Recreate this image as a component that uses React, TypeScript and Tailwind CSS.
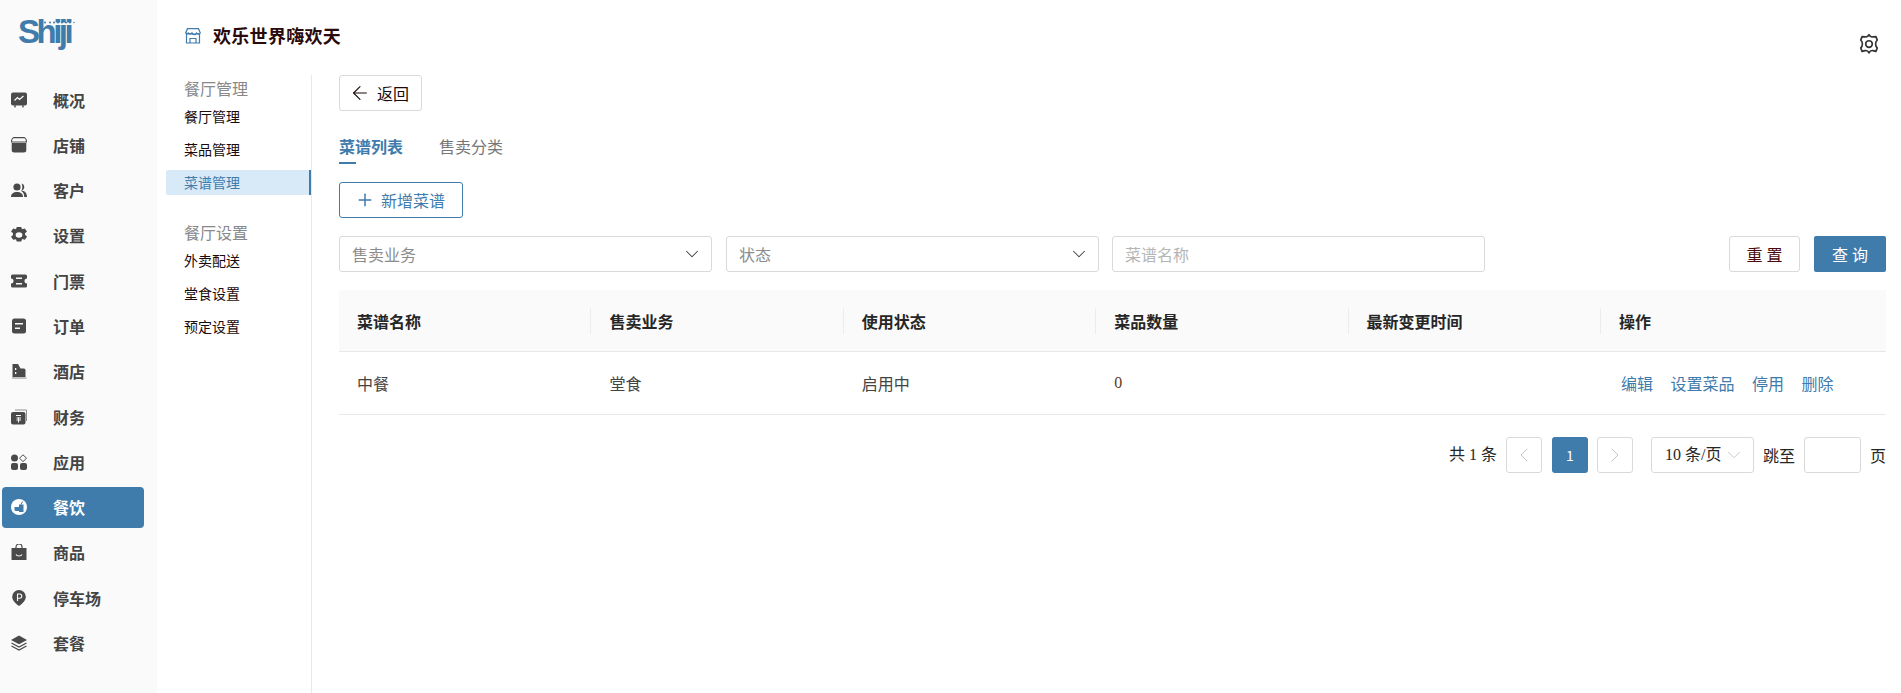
import React from "react";
import { ArrowLeft, Plus, ChevronDown, ChevronLeft, ChevronRight } from "lucide-react";

const FONT = "font-['Noto_Sans_CJK_SC','Liberation_Sans',sans-serif]";

const Ico = ({ children, fill = "#4a4a4a", box = "0 0 16 16", stretch = false }: { children: React.ReactNode; fill?: string; box?: string; stretch?: boolean }) => (
  <svg width="16" height="16" viewBox={box} fill={fill} className="shrink-0" preserveAspectRatio={stretch ? "none" : undefined}>
    {children}
  </svg>
);

const navItems: { label: string; icon: React.ReactNode; active?: boolean }[] = [
  {
    label: "概况",
    icon: (
      <Ico>
        <rect x="0" y="0.5" width="16" height="13" rx="2" />
        <path d="M3 13.5h2l-.5 2H3.500zM11 13.5h2l-.5 2h-1z" />
        <path d="M3.500 8.500 6.500 5.500 8.500 7.500 12.500 4" fill="none" stroke="#fff" strokeWidth="1.200" />
      </Ico>
    ),
  },
  {
    label: "店铺",
    icon: (
      <Ico>
        <path d="M3 0.700h10c1.500 0 2.500 2.500 2.500 4.300H.5C.5 3.200 1.500.7 3 .7z" fill="none" stroke="#4a4a4a" strokeWidth="1.200" />
        <path d="M0.700 6h14.600v7a2.500 2.500 0 0 1-2.500 2.500H3.200A2.500 2.500 0 0 1 .7 13z" />
      </Ico>
    ),
  },
  {
    label: "客户",
    icon: (
      <Ico>
        <circle cx="6" cy="5" r="3.600" />
        <path d="M0 15c0-3.500 2.500-5 6-5s6 1.500 6 5z" />
        <path d="M10.500 1.500a3.600 3.600 0 0 1 0 7c3 .4 5.500 2 5.500 6.500h-2.800c0-3-1-5-3-6 1.500-2 1.500-5.500.3-7.500z" />
      </Ico>
    ),
  },
  {
    label: "设置",
    icon: (
      <Ico box="1.600 0 12.800 16" stretch>
        <path
          fillRule="evenodd"
          d="M6.200 0h3.600l.6 2.200 2.200-.7 1.800 3.100-1.600 1.600.1 1.800 1.600 1.600-1.800 3.100-2.200-.6-.7 2.400H6.200l-.6-2.300-2.200.6L1.600 9.700l1.600-1.700V6.200L1.600 4.600l1.800-3.100 2.200.7zM8 5.300a2.700 2.700 0 1 0 0 5.400 2.700 2.700 0 0 0 0-5.400z"
        />
      </Ico>
    ),
  },
  {
    label: "门票",
    icon: (
      <Ico>
        <path
          fillRule="evenodd"
          d="M1.500 1.500h13A1.500 1.500 0 0 1 16 3v2.500a2.500 2.500 0 0 0 0 5V13a1.500 1.500 0 0 1-1.500 1.500h-13A1.500 1.500 0 0 1 0 13v-2.500a2.500 2.500 0 0 0 0-5V3a1.500 1.500 0 0 1 1.500-1.500zM5 4.500v1.500h6V4.500zM5 10v1.500h6V10z"
        />
      </Ico>
    ),
  },
  {
    label: "订单",
    icon: (
      <Ico>
        <rect x="1" y="0.5" width="14" height="15" rx="2.500" />
        <path d="M4 5h8v1.500H4zM4 9.500h5V11H4z" fill="#fafafa" />
      </Ico>
    ),
  },
  {
    label: "酒店",
    icon: (
      <Ico>
        <path d="M1.500 1h5.500l2.500 4.500H13a1.500 1.500 0 0 1 1.500 1.500v7h-13z" />
        <path d="M1 14.500h14.500v1H1z" fill="#888" />
        <path d="M4 5h1.300v2H4zM4 9h1.300v2H4z" fill="#fafafa" />
      </Ico>
    ),
  },
  {
    label: "财务",
    icon: (
      <Ico>
        <path d="M4 1h11.500v11" fill="none" stroke="#777" strokeWidth="0.800" />
        <rect x="0" y="3" width="14.500" height="12.500" rx="2" />
        <path d="M5 6.500h5M5.500 9h4.500M5.500 11h4.500M7.500 8.500V13.500" stroke="#fafafa" strokeWidth="1" fill="none" />
      </Ico>
    ),
  },
  {
    label: "应用",
    icon: (
      <Ico>
        <rect x="0" y="0.5" width="7" height="7" rx="3.500" />
        <path d="M12 0.800 15.500 4.200 12 7.600 8.500 4.200z" fill="none" stroke="#4a4a4a" strokeWidth="1" />
        <rect x="0" y="9" width="7" height="7" rx="2" />
        <rect x="9" y="9" width="7" height="7" rx="2" />
      </Ico>
    ),
  },
  {
    label: "餐饮",
    active: true,
    icon: (
      <Ico fill="#fff">
        <circle cx="8" cy="8" r="8" />
        <path d="M8 5.500h4.500V13H8z" fill="#3f7bab" />
        <path d="M3.500 8H8v4H5a1.500 1.500 0 0 1-1.500-1.500z" fill="#3f7bab" />
        <path d="M10 5.500 11.500 2.500" stroke="#3f7bab" strokeWidth="1" fill="none" />
      </Ico>
    ),
  },
  {
    label: "商品",
    icon: (
      <Ico>
        <path d="M0.500 4h15v12h-15z" />
        <path d="M5 5V3a3 3 0 0 1 6 0v2" fill="none" stroke="#4a4a4a" strokeWidth="1.200" />
        <path d="M5 10.500c1 2 5 2 6 0" fill="none" stroke="#fafafa" strokeWidth="1.200" />
      </Ico>
    ),
  },
  {
    label: "停车场",
    icon: (
      <Ico>
        <path d="M8 0a6.800 6.800 0 0 1 6.800 6.800c0 3.400-3 6.700-6.800 9.200-3.800-2.500-6.800-5.800-6.800-9.200A6.800 6.800 0 0 1 8 0z" />
        <path d="M6.500 11V4h2.200a2 2 0 0 1 0 4.200H6.500" fill="none" stroke="#fafafa" strokeWidth="1.100" />
      </Ico>
    ),
  },
  {
    label: "套餐",
    icon: (
      <Ico>
        <path d="M8 0.500 16 5 8 9.200 0 5z" />
        <path d="M0.500 8 8 12l7.500-4M0.500 11 8 15l7.500-4" fill="none" stroke="#4a4a4a" strokeWidth="1.200" />
      </Ico>
    ),
  },
];

const Sidebar = () => (
  <div className="w-[157px] shrink-0 bg-[#fafafa] flex flex-col">
    <div className="h-[79px] pl-[18px] pt-[14px]">
      <div className="relative w-[60px] text-[#3f7bab] text-[33px] leading-[36px] font-bold tracking-[-3.500px] font-['Liberation_Sans',sans-serif]">
        Shiji
        <svg className="absolute left-[25px] top-[7px]" width="32" height="3" viewBox="0 0 32 3" fill="#3f7bab">
          <circle cx="2" cy="1.500" r="1" />
          <circle cx="7" cy="1.500" r="1" />
          <circle cx="11" cy="1.500" r="1" />
          <circle cx="15" cy="1.500" r="1" />
          <circle cx="19" cy="1.500" r="1" />
          <circle cx="23" cy="1.500" r="1" />
          <circle cx="27" cy="1.500" r="1" />
          <circle cx="31" cy="1.500" r="0.700" />
        </svg>
      </div>
    </div>
    <div className="flex flex-col gap-[4.300px]">
      {navItems.map((item) => (
        <div
          key={item.label}
          className={`ml-[2px] w-[142px] h-[41px] rounded-[4px] flex items-center pl-[9px] ${item.active ? "bg-[#3f7bab] text-white" : "text-[#444]"}`}
        >
          {item.icon}
          <span className="ml-[26px] text-[16px] font-bold">{item.label}</span>
        </div>
      ))}
    </div>
  </div>
);

const subGroups = [
  { title: "餐厅管理", items: ["餐厅管理", "菜品管理", "菜谱管理"] },
  { title: "餐厅设置", items: ["外卖配送", "堂食设置", "预定设置"] },
];

const SubNav = () => (
  <div className="w-[155px] shrink-0 border-r border-[#e8e8e8] pt-[1px] mt-[75px]">
    {subGroups.map((g, idx) => (
      <div key={g.title} className={idx > 0 ? "mt-[25px]" : ""}>
        <div className="pl-[27px] text-[16px] leading-[24px] text-[#888]">{g.title}</div>
        <div className="flex flex-col gap-[8px] mt-[4px]">
          {g.items.map((it) => {
            const on = it === "菜谱管理";
            return (
              <div
                key={it}
                className={`ml-[9px] h-[25px] pl-[18px] flex items-center text-[14px] rounded-l-[2px] ${on ? "bg-[#d8e9f8] text-[#3f7bab] border-r-2 border-[#3f7bab]" : "text-[#1a0a0a]"}`}
              >
                {it}
              </div>
            );
          })}
        </div>
      </div>
    ))}
  </div>
);

const Select = ({ label }: { label: string }) => (
  <div className="w-[373px] h-[36px] border border-[#d9d9d9] rounded-[3px] flex items-center justify-between pl-[12px] pr-[8px] text-[16px] text-[#8c8c8c]">
    <span>{label}</span>
    <ChevronDown size={22} strokeWidth={1.100} className="text-[#444]" />
  </div>
);

const cols = ["菜谱名称", "售卖业务", "使用状态", "菜品数量", "最新变更时间"];

const PagerBox = ({ children, cls }: { children: React.ReactNode; cls?: string }) => (
  <div className={`w-[36px] h-[36px] rounded-[3px] flex items-center justify-center ${cls}`}>{children}</div>
);

const Main = () => (
  <div className="flex-1 pl-[27px] pr-[15px] pt-[75px] min-w-0">
    <div className="w-[83px] h-[36px] border border-[#d9d9d9] rounded-[3px] flex items-center pl-[9px] text-[16px] text-[#1a0a0a]">
      <ArrowLeft size={22} strokeWidth={1.200} className="mr-[6px]" />
      返回
    </div>

    <div className="flex gap-[36px] mt-[23px] h-[30px] text-[16px] leading-[24px]">
      <div>
        <div className="font-bold text-[#3f7bab]">菜谱列表</div>
        <div className="w-[17px] h-[2px] bg-[#3f7bab] mt-[4px]" />
      </div>
      <div className="text-[#777]">售卖分类</div>
    </div>

    <div className="w-[124px] h-[36px] mt-[18px] border border-[#3f7bab] rounded-[3px] flex items-center pl-[15px] text-[16px] text-[#3f7bab]">
      <Plus size={20} strokeWidth={1.800} className="mr-[6px]" />
      新增菜谱
    </div>

    <div className="flex items-center mt-[18px]">
      <Select label="售卖业务" />
      <div className="w-[14px]" />
      <Select label="状态" />
      <div className="w-[13px]" />
      <div className="w-[373px] h-[36px] border border-[#d9d9d9] rounded-[3px] flex items-center pl-[12px] text-[16px] text-[#b5b5b5]">菜谱名称</div>
      <div className="ml-auto flex gap-[14px]">
        <div className="w-[71px] h-[36px] border border-[#d9d9d9] rounded-[3px] flex items-center justify-center pl-[4px] text-[16px] text-[#4a0a0a] tracking-[4px]">重置</div>
        <div className="w-[72px] h-[36px] bg-[#3f7bab] rounded-[2px] flex items-center justify-center pl-[4px] text-[16px] text-white tracking-[4px]">查询</div>
      </div>
    </div>

    <div className="mt-[18px] grid grid-cols-[252.400px_252.400px_252.400px_252.400px_252.400px_1fr]">
      {[...cols, "操作"].map((c, i) => (
        <div key={c} className="relative h-[62px] bg-[#fafafa] border-b border-[#e8e8e8] flex items-center pl-[18px] text-[16px] font-bold text-[#262626]">
          {c}
          {i < 5 && <span className="absolute right-0 top-[18px] h-[26px] w-px bg-[#ececec]" />}
        </div>
      ))}
      <div className="h-[63px] border-b border-[#e8e8e8] flex items-center pl-[18px] text-[16px] text-[#444]">中餐</div>
      <div className="h-[63px] border-b border-[#e8e8e8] flex items-center pl-[18px] text-[16px] text-[#444]">堂食</div>
      <div className="h-[63px] border-b border-[#e8e8e8] flex items-center pl-[18px] text-[16px] text-[#444]">启用中</div>
      <div className="h-[63px] border-b border-[#e8e8e8] flex items-center pl-[18px] text-[16px] text-[#5c3a1a] font-['Liberation_Serif',serif]">0</div>
      <div className="h-[63px] border-b border-[#e8e8e8]" />
      <div className="h-[63px] border-b border-[#e8e8e8] flex items-center pl-[20px] gap-[17.500px] text-[16px] text-[#3f7bab]">
        <span>编辑</span>
        <span>设置菜品</span>
        <span>停用</span>
        <span>删除</span>
      </div>
    </div>

    <div className="flex justify-end items-center mt-[22px] text-[16px] text-[#262626]">
      <span className="mr-[9px] font-['Liberation_Serif','Noto_Sans_CJK_SC',serif]">共 1 条</span>
      <PagerBox cls="border border-[#d9d9d9] text-[#c4c4c4]"><ChevronLeft size={24} strokeWidth={1} /></PagerBox>
      <PagerBox cls="ml-[10px] bg-[#3f7bab] text-white text-[14px]">1</PagerBox>
      <PagerBox cls="ml-[9px] border border-[#d9d9d9] text-[#c4c4c4]"><ChevronRight size={24} strokeWidth={1} /></PagerBox>
      <div className="ml-[18px] w-[103px] h-[36px] border border-[#d9d9d9] rounded-[3px] flex items-center pl-[13px] gap-[2px] font-['Liberation_Serif','Noto_Sans_CJK_SC',serif]">
        10 条/页
        <ChevronDown size={22} strokeWidth={1} className="text-[#c4c4c4]" />
      </div>
      <span className="ml-[9px]">跳至</span>
      <div className="ml-[9px] w-[57px] h-[36px] border border-[#d9d9d9] rounded-[3px]" />
      <span className="ml-[9px]">页</span>
    </div>
  </div>
);

export default function App() {
  return (
    <div className={`relative flex h-[693px] w-[1901px] overflow-hidden bg-white ${FONT}`}>
      <Sidebar />
      <div className="absolute left-[185px] top-[22px] flex items-center">
        <svg width="16" height="16" viewBox="0 0 16 16" fill="none" stroke="#3f7bab" strokeWidth="1.200">
          <path d="M1.500 6v9h13V6M2.500 0.700h11l1.800 4.300a2.300 2.300 0 0 1-3.700 0 2.400 2.400 0 0 1-4.600 0 2.400 2.400 0 0 1-3.700 0 2 2 0 0 1-2.600 0z" />
          <path d="M5 15v-4.500h6V15M1.500 6h13" />
        </svg>
        <span className="ml-[12px] text-[18px] tracking-[0.300px] font-bold text-[#2a0a0a]">欢乐世界嗨欢天</span>
      </div>
      <SubNav />
      <Main />
      <svg className="absolute left-[1858px] top-[33px]" width="22" height="22" viewBox="0 0 20 20" fill="none" stroke="#333" strokeWidth="1.500" strokeLinejoin="round">
        <path d="M10 1.500c.6 1.300 2.300 2.300 3.500 2l2.800-.2 1.200 3.200c-1 .8-1.500 1.800-1.500 3.500s.5 2.700 1.500 3.500l-1.200 3.200-2.800-.7c-1.200-.2-2.900.7-3.500 2-.6-1.300-2.300-2.200-3.500-2l-2.800.7-1.200-3.200c1-.8 1.500-1.800 1.500-3.500s-.5-2.700-1.500-3.500l1.200-3.200 2.800.2c1.200.3 2.900-.7 3.500-2z" />
        <circle cx="10" cy="10" r="3" />
      </svg>
    </div>
  );
}
